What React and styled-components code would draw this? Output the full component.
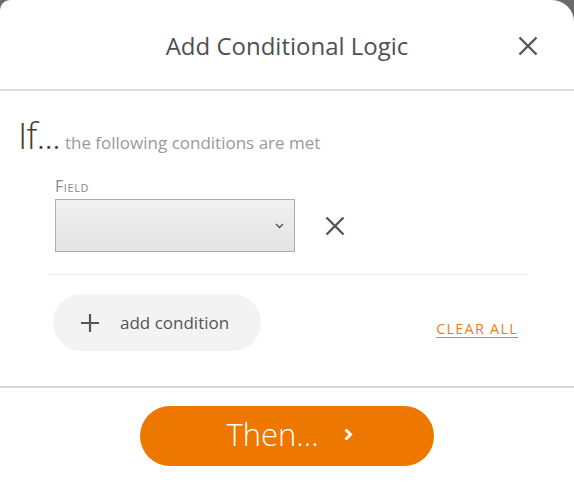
import React from 'react';
import styled, { createGlobalStyle } from 'styled-components';

const Global = createGlobalStyle`
  html, body { margin: 0; padding: 0; background: #6b6b6b; }
  body { font-family: "Open Sans", "Noto Sans", sans-serif; }
`;

const Modal = styled.div`
  width: 574px;
  height: 484px;
  background: #fff;
  border-radius: 10px 22px 0 0;
  overflow: hidden;
  display: flex;
  flex-direction: column;
`;

const Header = styled.div`
  height: 89px;
  flex-shrink: 0;
  border-bottom: 2px solid #dcdde3;
  display: flex;
  align-items: center;
  justify-content: center;
  position: relative;
`;

const Title = styled.h2`
  margin: 0;
  font-size: 24px;
  font-weight: 400;
  color: #505050;
  padding-top: 2px;
`;

const CloseButton = styled.button`
  position: absolute;
  right: 36px;
  top: 36px;
  background: none;
  border: 0;
  padding: 0;
  width: 20px;
  height: 20px;
  display: flex;
  cursor: pointer;
`;

const Body = styled.div`
  padding: 18px 0 0 18px;
  height: 297px;
  flex-shrink: 0;
  border-bottom: 2px solid #d5d8de;
  box-sizing: border-box;
`;

const Heading = styled.div`
  display: flex;
  align-items: baseline;
  gap: 5px;
  height: 44px;
`;

const IfText = styled.span`
  font-size: 37px;
  font-weight: 300;
  color: #4a3c30;
  letter-spacing: -1px;
`;

const Sub = styled.span`
  font-size: 17px;
  color: #9a9a9a;
`;

const ConditionBlock = styled.div`
  padding-left: 37px;
  margin-top: 24px;
`;

const Label = styled.div`
  font-size: 16px;
  color: #8a8a8a;
  font-variant: small-caps;
  letter-spacing: 0.6px;
  line-height: 19px;
  margin-bottom: 3px;
`;

const Row = styled.div`
  display: flex;
  align-items: center;
  gap: 30px;
`;

const Select = styled.div`
  width: 240px;
  height: 53px;
  box-sizing: border-box;
  border: 1px solid #acacac;
  background: linear-gradient(#f1f1f1, #e3e3e3);
  display: flex;
  align-items: center;
  justify-content: flex-end;
  padding-right: 10px;
`;

const IconBtn = styled.button`
  background: none;
  border: 0;
  padding: 0;
  display: flex;
  cursor: pointer;
`;

const Divider = styled.div`
  margin: 22px 47px 19px 30px;
  height: 1px;
  background: #efefef;
`;

const Actions = styled.div`
  display: flex;
  align-items: center;
  justify-content: space-between;
  padding: 0 56px 0 35px;
`;

const AddButton = styled.button`
  width: 208px;
  height: 57px;
  border-radius: 29px;
  background: #f3f3f3;
  border: 0;
  display: flex;
  align-items: center;
  padding: 0 0 0 28px;
  gap: 21px;
  font-family: inherit;
  font-size: 17px;
  color: #555;
  cursor: pointer;
`;

const ClearAll = styled.a`
  color: #f07d22;
  font-size: 14.5px;
  letter-spacing: 1.2px;
  text-decoration: underline;
  text-underline-offset: 3px;
  margin-top: 12px;
`;

const Footer = styled.div`
  display: flex;
  justify-content: center;
  padding-top: 18px;
`;

const ThenButton = styled.button`
  width: 294px;
  height: 60px;
  border-radius: 30px;
  border: 0;
  background: #ee7700;
  color: #fff;
  font-family: inherit;
  font-size: 31px;
  font-weight: 300;
  display: flex;
  align-items: center;
  justify-content: center;
  gap: 24px;
  padding: 0 0 4px 6px;
  cursor: pointer;
`;

const Cross = ({ size = 20, color = '#555', stroke = 2.4 }) => (
  <svg width={size} height={size} viewBox="0 0 20 20">
    <path d="M1.5 1.5L18.5 18.5M18.5 1.5L1.5 18.5" stroke={color} strokeWidth={stroke} />
  </svg>
);

export default function App() {
  return (
    <>
      <Global />
      <Modal>
        <Header>
          <Title>Add Conditional Logic</Title>
          <CloseButton><Cross /></CloseButton>
        </Header>
        <Body>
          <Heading>
            <IfText>If...</IfText>
            <Sub>the following conditions are met</Sub>
          </Heading>
          <ConditionBlock>
            <Label>Field</Label>
            <Row>
              <Select>
                <svg width="9" height="6" viewBox="0 0 9 6">
                  <path d="M1 1l3.5 3.5L8 1" stroke="#555" strokeWidth="1.4" fill="none" />
                </svg>
              </Select>
              <IconBtn><Cross size={20} color="#555" /></IconBtn>
            </Row>
          </ConditionBlock>
          <Divider />
          <Actions>
            <AddButton>
              <svg width="18" height="18" viewBox="0 0 18 18">
                <path d="M9 0V18M0 9H18" stroke="#555" strokeWidth="2.2" />
              </svg>
              add condition
            </AddButton>
            <ClearAll href="#">CLEAR ALL</ClearAll>
          </Actions>
        </Body>
        <Footer>
          <ThenButton>
            Then...
            <svg width="11" height="15" viewBox="0 0 11 15">
              <path d="M2.5 2.5l5 5-5 5" stroke="#fff" strokeWidth="3" fill="none" />
            </svg>
          </ThenButton>
        </Footer>
      </Modal>
    </>
  );
}
